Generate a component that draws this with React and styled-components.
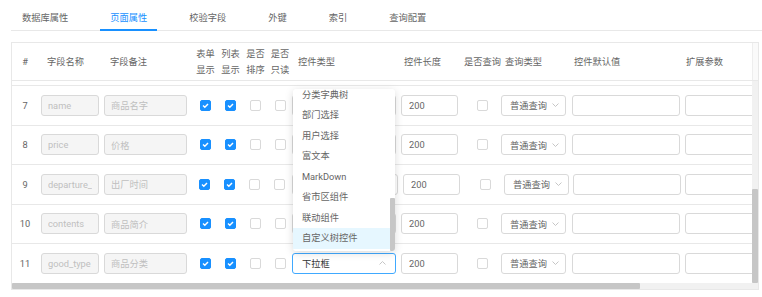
import React, { useLayoutEffect, useRef } from 'react';
import styled, { createGlobalStyle } from 'styled-components';

const COLS = '26px 64px 91px 25px 25px 25px 24px 106px 68px 33px 70px 113px 113px 89px';
const COLS_ALT = '26px 64px 90px 25px 25px 25px 25px 108px 68px 34px 68px 112px 113px 89px';
const TABLE_W = 872;
const VIEW_W = 740;
const VIEW_H = 202;
const ROW_H = 39.5;
const OPT_H = 20.5;
const LIST_H = 162;

const tabs = ['数据库属性', '页面属性', '校验字段', '外键', '索引', '查询配置'];

const heads = [
  { label: '#', center: true },
  { label: '字段名称', pl: 9 },
  { label: '字段备注', pl: 8 },
  { label: ['表单', '显示'], center: true },
  { label: ['列表', '显示'], center: true },
  { label: ['是否', '排序'], center: true },
  { label: ['是否', '只读'], center: true },
  { label: '控件类型', pl: 6 },
  { label: '控件长度', pl: 6 },
  { label: '是否查询', center: true },
  { label: '查询类型', pl: 6 },
  { label: '控件默认值', pl: 5 },
  { label: '扩展参数', pl: 4 },
  { label: '字典Table', pl: 4 },
];

const rows = [
  { no: 1, name: 'id', remark: '主键', form: false, list: false, type: '文本框' },
  { no: 2, name: 'create_by', remark: '创建人', form: false, list: false, type: '文本框' },
  { no: 3, name: 'create_time', remark: '创建日期', form: false, list: false, type: '日期(年-月-日)' },
  { no: 4, name: 'update_by', remark: '更新人', form: false, list: false, type: '文本框' },
  { no: 5, name: 'update_time', remark: '更新日期', form: false, list: false, type: '日期(年-月-日)' },
  { no: 6, name: 'sys_org_code', remark: '所属部门', form: false, list: false, type: '文本框' },
  { no: 7, name: 'name', remark: '商品名字', form: true, list: true, type: '文本框' },
  { no: 8, name: 'price', remark: '价格', form: true, list: true, type: '文本框' },
  { no: 9, name: 'departure_time', remark: '出厂时间', form: true, list: true, type: '日期(年-月-日)', alt: true },
  { no: 10, name: 'contents', remark: '商品简介', form: true, list: true, type: '多行文本' },
  { no: 11, name: 'good_type', remark: '商品分类', form: true, list: true, type: '下拉框', open: true },
];

const options = [
  '文本框', '密码', '下拉框', '下拉多选框', '下拉搜索框', '单选框', '多选框', '开关',
  '日期(年-月-日)', '日期(年月日时分秒)', '时间(HH:mm:ss)', '文件', '图片', '多行文本',
  '下拉树', 'Popup弹框', '分类字典树', '部门选择', '用户选择', '富文本', 'MarkDown',
  '省市区组件', '联动组件', '自定义树控件',
];

// thumb sizes follow the content / viewport ratio
const vThumb = Math.round((VIEW_H * VIEW_H) / (rows.length * ROW_H));
const hThumb = Math.round((VIEW_W * VIEW_W) / TABLE_W);
const listContent = options.length * OPT_H + 6;
const listThumb = Math.round((LIST_H * LIST_H) / listContent);

function Check({ checked }) {
  return (
    <Box $checked={checked}>
      {checked && (
        <svg width="9" height="9" viewBox="0 0 9 9">
          <polyline points="2,4.6 3.8,6.3 7,2.9" fill="none" stroke="#fff" strokeWidth="1.4" />
        </svg>
      )}
    </Box>
  );
}

function Chevron({ up }) {
  return (
    <svg width="7" height="4" viewBox="0 0 7 4">
      <path d={up ? 'M0.5 3.5 L3.5 0.5 L6.5 3.5' : 'M0.5 0.5 L3.5 3.5 L6.5 0.5'} fill="none" stroke="#bfbfbf" strokeWidth="0.9" />
    </svg>
  );
}

function App() {
  const bodyRef = useRef(null);
  const listRef = useRef(null);

  useLayoutEffect(() => {
    if (bodyRef.current) bodyRef.current.scrollTop = bodyRef.current.scrollHeight;
    if (listRef.current) listRef.current.scrollTop = listRef.current.scrollHeight;
  }, []);

  return (
    <Page>
      <GlobalStyle />
      <TabBar>
        {tabs.map((t, i) => (
          <Tab key={t} $active={i === 1}>{t}</Tab>
        ))}
      </TabBar>

      <TableWrap>
        <HeadLine>
          <Viewport>
            <Head>
              {heads.map((h, i) => (
                <HeadCell key={i} $center={h.center} $pl={h.pl || 0}>
                  {Array.isArray(h.label) ? (
                    <span>{h.label[0]}<br />{h.label[1]}</span>
                  ) : h.label}
                </HeadCell>
              ))}
            </Head>
          </Viewport>
          <Gutter />
        </HeadLine>

        <BodyLine>
          <Viewport ref={bodyRef}>
            {rows.map((r) => (
              <Row key={r.no} $alt={r.alt}>
                <Cell $center>{r.no}</Cell>
                <Cell $pl={3}><Input $w={58} $disabled readOnly value={r.name} /></Cell>
                <Cell $pl={2}><Input $w={83} $disabled readOnly value={r.remark} /></Cell>
                <Cell $center><Check checked={r.form} /></Cell>
                <Cell $center><Check checked={r.list} /></Cell>
                <Cell $center><Check checked={false} /></Cell>
                <Cell $center><Check checked={false} /></Cell>
                <Cell>
                  <Select $open={r.open}>
                    <SelectText $dark={r.open}>{r.type}</SelectText>
                    <Chevron up={r.open} />
                    {r.open && (
                      <Dropdown>
                        <DropList ref={listRef}>
                          {options.map((o) => (
                            <Option key={o} $active={o === '自定义树控件'}>{o}</Option>
                          ))}
                        </DropList>
                        <ListTrack>
                          <Thumb style={{ height: listThumb }} />
                        </ListTrack>
                      </Dropdown>
                    )}
                  </Select>
                </Cell>
                <Cell $pl={3}><Input $w={57} $pad={7} readOnly value="200" /></Cell>
                <Cell $center><Check checked={false} /></Cell>
                <Cell $pl={2}>
                  <SmallSelect>
                    <SelectText>普通查询</SelectText>
                    <Chevron />
                  </SmallSelect>
                </Cell>
                <Cell $pl={3}><Input $w={108} readOnly value="" /></Cell>
                <Cell $pl={3}><Input $w={108} readOnly value="" /></Cell>
                <Cell $pl={3}><Input $w={80} readOnly value="" /></Cell>
              </Row>
            ))}
          </Viewport>
          <VTrack>
            <Thumb style={{ height: vThumb }} />
          </VTrack>
        </BodyLine>

        <HTrack>
          <Thumb style={{ width: hThumb }} />
        </HTrack>
      </TableWrap>
    </Page>
  );
}

export default App;

// ----- styles
const GlobalStyle = createGlobalStyle`
  html, body {
    margin: 0;
    padding: 0;
    background: #fff;
  }
  body {
    font-family: Roboto, "Noto Sans CJK SC", sans-serif;
    font-size: 9.25px;
    color: #595959;
  }
`;

const Page = styled.div`
  padding-left: 11px;
  width: 751px;
`;

const TabBar = styled.div`
  display: flex;
  align-items: flex-start;
  gap: 22px;
  height: 30px;
  padding-left: 1px;
  border-bottom: 1px solid #e8e8e8;
`;

const Tab = styled.div`
  box-sizing: border-box;
  height: 31px;
  padding: 10px 10px 0;
  line-height: 16px;
  white-space: nowrap;
  color: ${(p) => (p.$active ? '#1890ff' : '#666')};
  border-bottom: 2px solid ${(p) => (p.$active ? '#1890ff' : 'transparent')};
`;

const TableWrap = styled.div`
  margin-top: 11px;
  width: 748px;
  box-sizing: border-box;
  border: 1px solid #e8e8e8;
`;

const HeadLine = styled.div`
  display: flex;
  height: 37px;
  border-bottom: 1px solid #e8e8e8;
`;

const BodyLine = styled.div`
  display: flex;
  height: ${VIEW_H}px;
`;

const Viewport = styled.div`
  flex: 1;
  min-width: 0;
  overflow: hidden;
`;

const Gutter = styled.div`
  width: 5px;
  background: #fafafa;
  border-left: 1px solid #eeeeee;
`;

const VTrack = styled.div`
  width: 6px;
  background: #f1f1f1;
  display: flex;
  flex-direction: column;
  justify-content: flex-end;
`;

const HTrack = styled.div`
  height: 6px;
  background: #f1f1f1;
  display: flex;
`;

const Thumb = styled.div`
  flex: 0 0 auto;
  width: 100%;
  height: 100%;
  background: #c6c6c6;
  border-radius: 1px;
`;

const Head = styled.div`
  display: grid;
  grid-template-columns: ${COLS};
  width: ${TABLE_W}px;
  height: 37px;
`;

const HeadCell = styled.div`
  display: flex;
  align-items: center;
  justify-content: ${(p) => (p.$center ? 'center' : 'flex-start')};
  padding-left: ${(p) => p.$pl}px;
  line-height: 16px;
  white-space: nowrap;
  color: #666;
`;

const Row = styled.div`
  display: grid;
  grid-template-columns: ${(p) => (p.$alt ? COLS_ALT : COLS)};
  width: ${TABLE_W}px;
  height: ${ROW_H}px;
  box-sizing: border-box;
  border-top: 1px solid #e8e8e8;
`;

const Cell = styled.div`
  display: flex;
  align-items: center;
  justify-content: ${(p) => (p.$center ? 'center' : 'flex-start')};
  padding-left: ${(p) => p.$pl || 0}px;
  min-width: 0;
  color: #666;
`;

const Input = styled.input`
  box-sizing: border-box;
  width: ${(p) => p.$w}px;
  height: 21px;
  padding: 0 ${(p) => p.$pad || 6}px;
  border: 1px solid #d9d9d9;
  border-radius: 3px;
  background: ${(p) => (p.$disabled ? '#f5f5f5' : '#fff')};
  color: ${(p) => (p.$disabled ? '#bfbfbf' : '#666')};
  font: inherit;
  outline: none;
`;

const Box = styled.span`
  display: inline-flex;
  align-items: center;
  justify-content: center;
  box-sizing: border-box;
  width: 11px;
  height: 11px;
  border-radius: 2px;
  border: 1px solid ${(p) => (p.$checked ? '#1890ff' : '#d9d9d9')};
  background: ${(p) => (p.$checked ? '#1890ff' : '#fff')};
`;

const Select = styled.div`
  position: relative;
  box-sizing: border-box;
  display: flex;
  align-items: center;
  justify-content: space-between;
  width: calc(100% - 2px);
  height: 21px;
  padding: 0 9px;
  border: 1px solid ${(p) => (p.$open ? '#40a9ff' : '#d9d9d9')};
  border-radius: 3px;
  background: #fff;
`;

const SmallSelect = styled.div`
  box-sizing: border-box;
  display: flex;
  align-items: center;
  justify-content: space-between;
  width: 65px;
  height: 21px;
  padding: 0 6px 0 8px;
  border: 1px solid #d9d9d9;
  border-radius: 3px;
  background: #fff;
`;

const SelectText = styled.span`
  white-space: nowrap;
  overflow: hidden;
  color: ${(p) => (p.$dark ? '#333' : '#666')};
`;

const Dropdown = styled.div`
  position: absolute;
  left: 0;
  bottom: calc(100% + 3px);
  width: 102px;
  height: ${LIST_H}px;
  display: flex;
  background: #fff;
  border-radius: 3px;
  box-shadow: 0 2px 8px rgba(0, 0, 0, 0.15);
  z-index: 5;
  overflow: hidden;
`;

const DropList = styled.div`
  flex: 1;
  min-width: 0;
  height: ${LIST_H}px;
  overflow: hidden;
  padding: 4px 0 2px;
  box-sizing: border-box;
`;

const ListTrack = styled.div`
  width: 5px;
  display: flex;
  flex-direction: column;
  justify-content: flex-end;
`;

const Option = styled.div`
  height: ${OPT_H}px;
  line-height: ${OPT_H}px;
  padding-left: 9px;
  white-space: nowrap;
  color: #666;
  background: ${(p) => (p.$active ? '#e6f7ff' : 'transparent')};
`;
